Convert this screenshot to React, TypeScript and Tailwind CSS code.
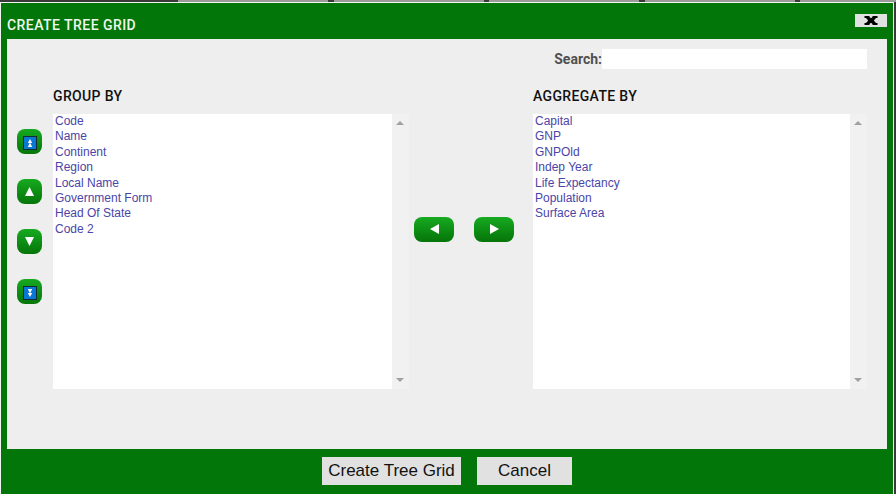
import type { ReactNode } from "react";

const groups = ["Code", "Name", "Continent", "Region", "Local Name", "Government Form", "Head Of State", "Code 2"];
const aggregates = ["Capital", "GNP", "GNPOld", "Indep Year", "Life Expectancy", "Population", "Surface Area"];

function ListBox({ items, width }: { items: string[]; width: string }) {
  return (
    <div className={`flex h-[275px] bg-white ${width}`}>
      <ul className="flex-1 pl-[2px] font-['Liberation_Sans',Arial,sans-serif] text-[12px] leading-[15.4px] text-[#4a45a8]">
        {items.map((t) => (
          <li key={t}>{t}</li>
        ))}
      </ul>
      <div className="flex w-[17px] flex-col items-center justify-between bg-[#f1f1f1] pt-[7px] pb-[7px]">
        <svg width="8" height="4" viewBox="0 0 8 4" className="mr-px"><path d="M0 4L4 0L8 4Z" fill="#a0a0a0" /></svg>
        <svg width="8" height="4" viewBox="0 0 8 4" className="mr-px"><path d="M0 0H8L4 4Z" fill="#a0a0a0" /></svg>
      </div>
    </div>
  );
}

function GreenButton({ width, label, children }: { width: string; label: string; children: ReactNode }) {
  return (
    <button aria-label={label} className={`flex h-[25px] items-center justify-center rounded-[8px] bg-gradient-to-b from-[#16aa20] to-[#067509] ${width}`}>
      {children}
    </button>
  );
}

function DoubleArrow({ down }: { down?: boolean }) {
  return (
    <svg width="14" height="14" viewBox="0 0 14 14" className="mt-[3px] ml-[1px]">
      <rect x=".5" y=".5" width="13" height="13" fill="#0878d4" stroke="#102b32" />
      <path d="M7 3L9.2 7H4.8ZM7 6.5L9.2 11H4.8Z" fill="#fff" transform={down ? "rotate(180 7 7)" : undefined} />
    </svg>
  );
}

const heading = "font-[Roboto,sans-serif] text-[14px] font-medium leading-[16px] tracking-[0.35px]";

export default function App() {
  return (
    <div className="flex h-[494px] w-[896px] flex-col overflow-hidden bg-[#3a3a3a]">
      <div className="flex h-[2px] shrink-0 bg-[#9b9b9b]">
        <div className="w-[178px] bg-[#3a3a3a]" />
        <div className="ml-[150px] w-[6px] bg-[#3a3a3a]" />
        <div className="ml-[150px] w-[5px] bg-[#3a3a3a]" />
        <div className="ml-[150px] w-[6px] bg-[#3a3a3a]" />
        <div className="ml-[150px] w-[5px] bg-[#3a3a3a]" />
      </div>
      <div className="flex h-[492px] w-[894px] flex-col border-x border-t border-[#f0f5f0] bg-[#027608]">
        <header className="flex h-[36px] shrink-0 justify-between pr-[6px] pl-[6px]">
          <h1 className="pt-[14px] font-[Roboto,sans-serif] text-[14px] leading-[16px] font-medium tracking-[0.45px] text-[#eef8ee]">CREATE TREE GRID</h1>
          <button aria-label="Close" className="mt-[11px] flex h-[13px] w-[32px] items-center justify-center bg-[#e1e1e1]">
            <svg width="14" height="9" viewBox="0 0 14 9"><path d="M.5 0H5.5V1L7 2.3L8.5 1V0H13.5V2H12L9.8 4.5L12 7H13.5V9H8.5V8L7 6.7L5.5 8V9H.5V7H2L4.2 4.5L2 2H.5Z" fill="#000" /></svg>
          </button>
        </header>
        <main className="mx-[6px] h-[410px] w-[880px] shrink-0 bg-[#eeeeee] pt-[10px]">
          <label className="flex h-[20px] items-center justify-end pr-[20px] font-[Roboto,sans-serif] text-[14px] font-bold text-[#505050]">
            <span>Search:</span>
            <input className="h-[20px] w-[265px] bg-white" />
          </label>
          <div className="flex pt-[19px]">
            <div className="flex w-[46px] flex-col gap-[25px] pt-[41px] pl-[10px]">
              <GreenButton label="Move to top" width="w-[25px]"><DoubleArrow /></GreenButton>
              <GreenButton label="Move up" width="w-[25px]"><svg width="9" height="9" viewBox="0 0 9 9" className="mr-px"><path d="M4.5 0L9 9H0Z" fill="#fff" /></svg></GreenButton>
              <GreenButton label="Move down" width="w-[25px]"><svg width="9" height="9" viewBox="0 0 9 9" className="mr-px"><path d="M4.5 9L0 0H9Z" fill="#fff" /></svg></GreenButton>
              <GreenButton label="Move to bottom" width="w-[25px]"><DoubleArrow down /></GreenButton>
            </div>
            <section className="w-[356px]">
              <h2 className={`mb-[10px] text-[#111] ${heading}`}>GROUP BY</h2>
              <ListBox items={groups} width="w-[356px]" />
            </section>
            <div className="flex w-[124px] gap-[20px] pt-[129px] pl-[5px]">
              <GreenButton label="Move left" width="w-[40px]"><svg width="9" height="10" viewBox="0 0 9 10" className="mb-[2px]"><path d="M0 5L9 0V10Z" fill="#fff" /></svg></GreenButton>
              <GreenButton label="Move right" width="w-[40px]"><svg width="9" height="10" viewBox="0 0 9 10" className="mb-[2px]"><path d="M9 5L0 0V10Z" fill="#fff" /></svg></GreenButton>
            </div>
            <section className="w-[334px]">
              <h2 className={`mb-[10px] text-[#111] ${heading}`}>AGGREGATE BY</h2>
              <ListBox items={aggregates} width="w-[334px]" />
            </section>
          </div>
        </main>
        <footer className="flex gap-[16px] pt-[8px] pl-[321px] font-['Liberation_Sans',Arial,sans-serif] text-[17px] leading-[26px] text-[#111]">
          <button className="h-[28px] w-[139px] bg-[#e1e1e1] whitespace-nowrap">Create Tree Grid</button>
          <button className="h-[28px] w-[95px] bg-[#e1e1e1]">Cancel</button>
        </footer>
      </div>
    </div>
  );
}
